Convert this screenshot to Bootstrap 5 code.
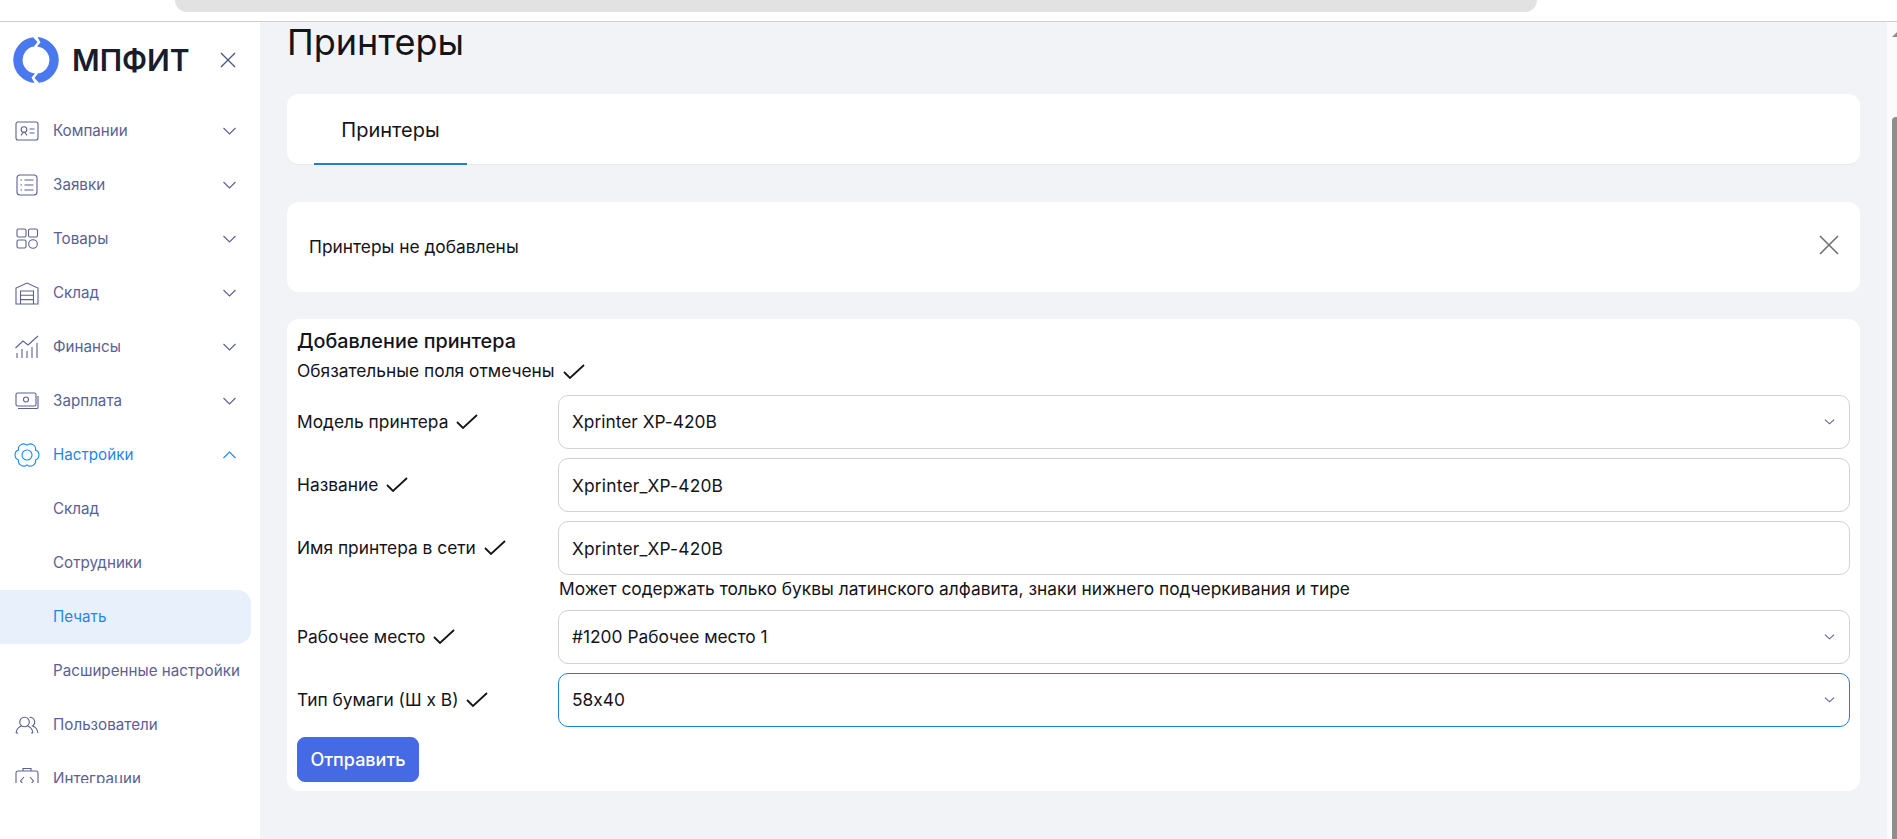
<!DOCTYPE html>
<html lang="ru">

<head>
    <meta charset="UTF-8">
    <meta name="viewport" content="width=device-width, initial-scale=1.0">
    <title>Принтеры | МПФИТ</title>

    <link rel="stylesheet" href="https://cdn.jsdelivr.net/npm/bootstrap@5.3.0/dist/css/bootstrap.min.css">

    <style>
        html, body {
            height: 100%;
            overflow: hidden;
        }

        body {
            font-family: 'Inter', 'Liberation Sans', sans-serif;
            font-size: 17.35px;
            color: #14141a;
            background: #fff;
        }

        .browser-strip {
            height: 22px;
            flex: none;
            border-bottom: 1px solid #cfcfcf;
            padding-left: 175px;
            padding-right: 360px;
        }

        .browser-address {
            height: 12px;
            background: #e2e2e2;
            border-radius: 0 0 22px 22px;
        }

        .side-panel {
            width: 260px;
            flex: none;
            background: #fff;
        }

        .side-head {
            height: 82px;
            padding: 15px 0 0 13px;
        }

        .logo-word {
            font-size: 30px;
            font-weight: 600;
            line-height: 46px;
            color: #191c2c;
            margin-left: 13px;
        }

        .side-close {
            margin-left: 30px;
            margin-top: 15px;
        }

        .side-menu {
            height: 679px;
            overflow: hidden;
            margin-right: 9px;
        }

        .side-link {
            height: 54px;
            flex: none;
            padding-left: 53px;
            padding-right: 15px;
            font-size: 15.2px;
            color: #5b6193;
            white-space: nowrap;
            text-decoration: none;
            border-radius: 0 14px 14px 0;
        }

        .side-link:hover {
            color: #5b6193;
        }

        .side-ico {
            width: 26px;
            height: 26px;
            margin-left: -39px;
            margin-right: 13px;
            flex: none;
        }

        .side-link.is-open {
            color: #1f87e8;
        }

        .side-link.is-current {
            color: #1f87e8;
            background: #e8f0fb;
        }

        .content-area {
            background: #f1f3f6;
            padding: 0 27px;
            min-width: 0;
        }

        .page-title {
            font-size: 36px;
            font-weight: 400;
            line-height: 40px;
            margin: 0 0 32px;
            color: #14141a;
        }

        .white-box {
            background: #fff;
            border-radius: 12px;
        }

        .tabs-box {
            height: 71px;
            padding-left: 27px;
            border-bottom: 1px solid #e6e8ec;
            margin-bottom: 37px;
        }

        .tab-item {
            width: 153px;
            padding-top: 2px;
            font-size: 20px;
            font-weight: 400;
            color: #14141a;
            border-bottom: 2px solid #1f7fd0;
            margin-bottom: -1px;
        }

        .notice-box {
            height: 90px;
            padding: 0 21px 0 22px;
            margin-bottom: 27px;
        }

        .form-box {
            height: 472px;
            padding: 10px 10px 9px;
        }

        .form-title {
            font-size: 19.8px;
            font-weight: 500;
            line-height: 24px;
            margin: 0 0 6px;
        }

        .must-note {
            line-height: 24px;
            margin-bottom: 12px;
        }

        .field-row {
            margin-bottom: 9px;
        }

        .field-label {
            width: 261px;
            flex: none;
        }

        .field-input.form-control,
        .field-input.form-select {
            height: 54px;
            font-size: 17.35px;
            font-feature-settings: "calt" 0;
            color: #14141a;
            border: 1px solid #d2d2d2;
            border-radius: 10px;
            padding-left: 13px;
            box-shadow: none;
        }

        .field-input.form-control {
            letter-spacing: .2px;
        }

        .field-input.form-select {
            background-image: url("data:image/svg+xml,%3csvg xmlns='http://www.w3.org/2000/svg' viewBox='0 0 12 8'%3e%3cpath fill='none' stroke='%235b6193' stroke-width='1.2' d='M1 1.5l5 4.5 5-4.5'/%3e%3c/svg%3e");
            background-size: 11px 8px;
            background-position: right 14px center;
        }

        .field-input.field-active {
            border-color: #1f7fd8;
        }

        .field-hint {
            margin: -9px 0 7px 261px;
            line-height: 28px;
            padding-left: 1px;
        }

        .send-btn {
            width: 122px;
            height: 45px;
            padding: 0;
            font-size: 18px;
            font-weight: 500;
            background: #4669e4;
            border-color: #4669e4;
            border-radius: 8px;
            margin-top: 1px;
        }

        .fake-scroll {
            width: 10px;
            flex: none;
            background: #fbfbfb;
        }

        .fake-scroll-arrow {
            width: 0;
            height: 0;
            margin: 10px 0 0 5px;
            border-left: 5px solid transparent;
            border-bottom: 5px solid #8e8e8e;
        }

        .fake-scroll-thumb {
            margin: 80px 0 0 5px;
            background: #8e8e8e;
            border-radius: 4px 0 0 0;
        }
    </style>
</head>

<body class="d-flex flex-column">

    <div class="browser-strip">
        <div class="browser-address"></div>
    </div>

    <div class="d-flex flex-grow-1 overflow-hidden">
        <aside class="side-panel">
            <div class="side-head d-flex align-items-start">
                <svg width="46" height="46" viewBox="0 0 46 46" fill="#4a78ee">
                    <path d="M24.500.1A23 23 0 0 1 26 45.800L21.500 41 25 36.400A13.500 13.500 0 0 0 24 9.600L27.500 5.500z"/>
                    <path transform="rotate(180 23 23)" d="M24.500.1A23 23 0 0 1 26 45.800L21.500 41 25 36.400A13.500 13.500 0 0 0 24 9.600L27.500 5.500z"/>
                </svg>
                <span class="logo-word">МПФИТ</span>
                <svg class="side-close" width="16" height="16" viewBox="0 0 16 16" fill="none" stroke="#4f5688" stroke-width="1.400">
                    <path d="M1 1l14 14M15 1L1 15"/>
                </svg>
            </div>

            <nav class="side-menu d-flex flex-column">
                <a class="side-link d-flex align-items-center" href="#">
                    <svg class="side-ico" viewBox="0 0 26 26" fill="none" stroke="#5b6193" stroke-width="1.100">
                        <rect x="2" y="4" width="22" height="18" rx="2"/>
                        <path d="M7 17.500l2.500-3.500M13 17.500L10.500 14M15.500 11h5M15.500 15h5"/>
                        <circle cx="10" cy="11.500" r="2.800"/>
                    </svg>
                    <span class="flex-grow-1">Компании</span>
                    <svg width="13" height="8" viewBox="0 0 13 8" fill="none" stroke="#5b6193" stroke-width="1.100"><path d="M.5 1l6 6 6-6"/></svg>
                </a>
                <a class="side-link d-flex align-items-center" href="#">
                    <svg class="side-ico" viewBox="0 0 26 26" fill="none" stroke="#5b6193" stroke-width="1.100">
                        <rect x="3" y="3" width="20" height="20" rx="3"/>
                        <path d="M10.500 8h9M10.500 13h9M10.500 18h9M6.500 8h1.500M6.500 13h1.500M6.500 18h1.500"/>
                    </svg>
                    <span class="flex-grow-1">Заявки</span>
                    <svg width="13" height="8" viewBox="0 0 13 8" fill="none" stroke="#5b6193" stroke-width="1.100"><path d="M.5 1l6 6 6-6"/></svg>
                </a>
                <a class="side-link d-flex align-items-center" href="#">
                    <svg class="side-ico" viewBox="0 0 26 26" fill="none" stroke="#5b6193" stroke-width="1.100">
                        <rect x="3" y="3" width="9" height="8" rx="1.500"/>
                        <rect x="14.500" y="3" width="9" height="8" rx="1.500"/>
                        <rect x="3" y="14" width="9" height="8" rx="1.500"/>
                        <circle cx="19" cy="18" r="4.300"/>
                    </svg>
                    <span class="flex-grow-1">Товары</span>
                    <svg width="13" height="8" viewBox="0 0 13 8" fill="none" stroke="#5b6193" stroke-width="1.100"><path d="M.5 1l6 6 6-6"/></svg>
                </a>
                <a class="side-link d-flex align-items-center" href="#">
                    <svg class="side-ico" viewBox="0 0 26 26" fill="none" stroke="#5b6193" stroke-width="1.100">
                        <path d="M2 24V8l11-5 11 5v16zM6.500 24V11h13v13M6.500 15.300h13M6.500 19.600h13"/>
                    </svg>
                    <span class="flex-grow-1">Склад</span>
                    <svg width="13" height="8" viewBox="0 0 13 8" fill="none" stroke="#5b6193" stroke-width="1.100"><path d="M.5 1l6 6 6-6"/></svg>
                </a>
                <a class="side-link d-flex align-items-center" href="#">
                    <svg class="side-ico" viewBox="0 0 26 26" fill="none" stroke="#5b6193" stroke-width="1.100">
                        <path d="M1.500 14L9 7l5 4 10-9M3 24v-5M8 24v-9M13 24v-7M18 24v-11M23 24V9"/>
                    </svg>
                    <span class="flex-grow-1">Финансы</span>
                    <svg width="13" height="8" viewBox="0 0 13 8" fill="none" stroke="#5b6193" stroke-width="1.100"><path d="M.5 1l6 6 6-6"/></svg>
                </a>
                <a class="side-link d-flex align-items-center" href="#">
                    <svg class="side-ico" viewBox="0 0 26 26" fill="none" stroke="#5b6193" stroke-width="1.100">
                        <rect x="2" y="5" width="20" height="13" rx="1.500"/>
                        <circle cx="12" cy="11.500" r="2.500"/>
                        <path d="M24 8v11.500a1 1 0 0 1-1 1H4"/>
                    </svg>
                    <span class="flex-grow-1">Зарплата</span>
                    <svg width="13" height="8" viewBox="0 0 13 8" fill="none" stroke="#5b6193" stroke-width="1.100"><path d="M.5 1l6 6 6-6"/></svg>
                </a>
                <a class="side-link is-open d-flex align-items-center" href="#">
                    <svg class="side-ico" viewBox="0 0 26 26" fill="none" stroke="#1f87e8" stroke-width="1.100">
                        <path d="M13 3.200A5.200 5.200 0 0 1 21.500 8.100 5.200 5.200 0 0 1 21.500 17.900 5.200 5.200 0 0 1 13 22.800 5.200 5.200 0 0 1 4.500 17.900 5.200 5.200 0 0 1 4.500 8.100 5.200 5.200 0 0 1 13 3.200z"/>
                        <circle cx="13" cy="13" r="5"/>
                    </svg>
                    <span class="flex-grow-1">Настройки</span>
                    <svg width="13" height="8" viewBox="0 0 13 8" fill="none" stroke="#1f87e8" stroke-width="1.100"><path d="M.5 7l6-6 6 6"/></svg>
                </a>
                <a class="side-link d-flex align-items-center" href="#">Склад</a>
                <a class="side-link d-flex align-items-center" href="#">Сотрудники</a>
                <a class="side-link is-current d-flex align-items-center" href="#">Печать</a>
                <a class="side-link d-flex align-items-center" href="#">Расширенные настройки</a>
                <a class="side-link d-flex align-items-center" href="#">
                    <svg class="side-ico" viewBox="0 0 26 26" fill="none" stroke="#5b6193" stroke-width="1.100">
                        <circle cx="10.500" cy="10" r="4.800"/>
                        <path d="M2 21c.5-3.500 3-6.200 5.500-7M19 21c-.5-3.500-3-6.200-5.500-7M2 21h2M19 21h-2M15.500 5.200a4.800 4.800 0 0 1 3 8.800c2.500.8 5 3.500 5.500 7"/>
                    </svg>
                    <span class="flex-grow-1">Пользователи</span>
                </a>
                <a class="side-link d-flex align-items-center" href="#">
                    <svg class="side-ico" viewBox="0 0 26 26" fill="none" stroke="#5b6193" stroke-width="1.100">
                        <rect x="2" y="5" width="22" height="19" rx="2"/>
                        <path d="M9 5V2.500h8V5M10 11l-3.500 4 3.500 4M16 11l3.500 4-3.500 4"/>
                    </svg>
                    <span class="flex-grow-1">Интеграции</span>
                </a>
            </nav>
        </aside>

        <main class="content-area flex-grow-1">
            <h1 class="page-title">Принтеры</h1>

            <div class="white-box tabs-box d-flex">
                <div class="tab-item d-flex align-items-center justify-content-center">Принтеры</div>
            </div>

            <div class="white-box notice-box d-flex align-items-center justify-content-between">
                <span>Принтеры не добавлены</span>
                <svg class="mb-1" width="20" height="20" viewBox="0 0 20 20" fill="none" stroke="#6f6f6f" stroke-width="1.600">
                    <path d="M1 1l18 18M19 1L1 19"/>
                </svg>
            </div>

            <form class="white-box form-box">
                <h2 class="form-title">Добавление принтера</h2>
                <div class="must-note d-flex align-items-center gap-2">
                    Обязательные поля отмечены
                    <svg width="22" height="15" viewBox="0 0 22 15" fill="none" stroke="#14141a" stroke-width="1.800"><path d="M1 8l6 6L21 1"/></svg>
                </div>

                <div class="field-row d-flex align-items-center">
                    <label class="field-label d-flex align-items-center gap-2">
                        Модель принтера
                        <svg width="22" height="15" viewBox="0 0 22 15" fill="none" stroke="#14141a" stroke-width="1.800"><path d="M1 8l6 6L21 1"/></svg>
                    </label>
                    <select class="form-select field-input">
                        <option>Xprinter XP-420B</option>
                    </select>
                </div>

                <div class="field-row d-flex align-items-center">
                    <label class="field-label d-flex align-items-center gap-2">
                        Название
                        <svg width="22" height="15" viewBox="0 0 22 15" fill="none" stroke="#14141a" stroke-width="1.800"><path d="M1 8l6 6L21 1"/></svg>
                    </label>
                    <input class="form-control field-input" value="Xprinter_XP-420B">
                </div>

                <div class="field-row d-flex align-items-center">
                    <label class="field-label d-flex align-items-center gap-2">
                        Имя принтера в сети
                        <svg width="22" height="15" viewBox="0 0 22 15" fill="none" stroke="#14141a" stroke-width="1.800"><path d="M1 8l6 6L21 1"/></svg>
                    </label>
                    <input class="form-control field-input" value="Xprinter_XP-420B">
                </div>
                <div class="field-hint">Может содержать только буквы латинского алфавита, знаки нижнего подчеркивания и тире</div>

                <div class="field-row d-flex align-items-center">
                    <label class="field-label d-flex align-items-center gap-2">
                        Рабочее место
                        <svg width="22" height="15" viewBox="0 0 22 15" fill="none" stroke="#14141a" stroke-width="1.800"><path d="M1 8l6 6L21 1"/></svg>
                    </label>
                    <select class="form-select field-input">
                        <option>#1200 Рабочее место 1</option>
                    </select>
                </div>

                <div class="field-row d-flex align-items-center">
                    <label class="field-label d-flex align-items-center gap-2">
                        Тип бумаги (Ш х В)
                        <svg width="22" height="15" viewBox="0 0 22 15" fill="none" stroke="#14141a" stroke-width="1.800"><path d="M1 8l6 6L21 1"/></svg>
                    </label>
                    <select class="form-select field-input field-active">
                        <option>58x40</option>
                    </select>
                </div>

                <button type="button" class="btn btn-primary send-btn">Отправить</button>
            </form>
        </main>

        <div class="fake-scroll d-flex flex-column">
            <div class="fake-scroll-arrow"></div>
            <div class="fake-scroll-thumb flex-grow-1"></div>
        </div>
    </div>

    <script src="https://cdn.jsdelivr.net/npm/bootstrap@5.3.0/dist/js/bootstrap.bundle.min.js"></script>
</body>

</html>
